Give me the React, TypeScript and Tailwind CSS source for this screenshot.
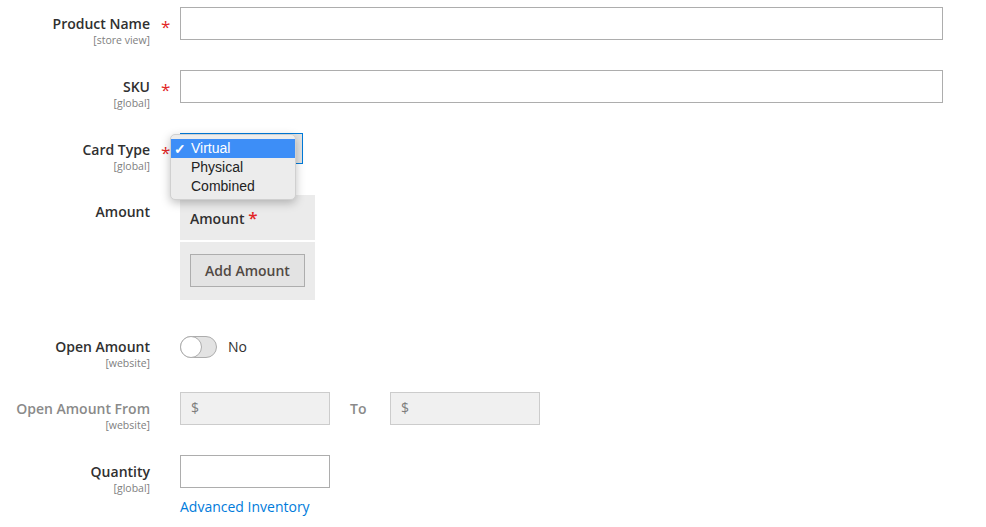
import type { ReactNode } from "react";

const Star = () => <span className="text-[#e22626] text-[17px] leading-none">*</span>;

const Label = ({ text, scope, required, muted }: { text: string; scope?: string; required?: boolean; muted?: boolean }) => (
  <div className="flex shrink-0 h-[33px]">
    <div className="w-[150px] text-right pt-[8px]">
      <div className={`text-[14px] leading-[18px] font-semibold ${muted ? "text-[#8a8a8a]" : "text-[#303030]"}`}>{text}</div>
      {scope && <div className="text-[10.5px] leading-[13px] text-[#808080] mt-[1px]">{scope}</div>}
    </div>
    <div className="w-[30px] pl-[11px] pt-[8px]">{required && <Star />}</div>
  </div>
);

const Row = ({ children, className = "" }: { children: ReactNode; className?: string }) => (
  <div className={`flex ${className}`}>{children}</div>
);

const TextInput = ({ className = "" }: { className?: string }) => (
  <div className={`h-[33px] border border-[#adadad] bg-white ${className}`} />
);

const DollarInput = () => (
  <div className="h-[33px] w-[150px] border border-[#cccccc] bg-[#f0f0f0] pl-[10px] pt-[6px] text-[14px] leading-[18px] text-[#7d7d7d]">$</div>
);

export default function App() {
  return (
    <div className="w-[986px] h-[527px] overflow-hidden bg-white font-['Open_Sans',sans-serif] pt-[7px]">
      <Row>
        <Label text="Product Name" scope="[store view]" required />
        <TextInput className="w-[763px]" />
      </Row>

      <Row className="mt-[30px]">
        <Label text="SKU" scope="[global]" required />
        <TextInput className="w-[763px]" />
      </Row>

      <Row className="mt-[30px]">
        <Label text="Card Type" scope="[global]" required />
        <div className="relative h-[33px]">
          <div className="h-[31px] w-[123px] border border-[#007bdb] bg-white flex justify-end">
            <div className="w-[33px] border-l border-[#007bdb] bg-[#e3e3e3]" />
          </div>
          <div className="absolute left-[-10px] top-[1px] w-[126px] h-[66px] rounded-[5px] bg-[#ececec] border border-[#d0d0d0] shadow-[0_3px_10px_rgba(0,0,0,0.25)] pt-[4px] font-['Liberation_Sans',sans-serif] text-[14px] text-[#222]">
            <div className="h-[19px] bg-[#3d8ef7] text-white flex items-center">
              <span className="w-[20px] pl-[3px] text-[14px] font-bold leading-none">✓</span>
              <span>Virtual</span>
            </div>
            <div className="h-[19px] flex items-center pl-[20px]">Physical</div>
            <div className="h-[19px] flex items-center pl-[20px]">Combined</div>
          </div>
        </div>
      </Row>

      <Row className="mt-[29px]">
        <Label text="Amount" />
        <div className="w-[135px] bg-[#ebebeb]">
          <div className="h-[45px] px-[10px] pt-[14px] text-[14px] leading-[18px] font-semibold text-[#303030]">
            Amount <Star />
          </div>
          <div className="h-[2px] bg-white" />
          <div className="h-[58px] px-[10px] pt-[12px]">
            <div className="h-[33px] w-[115px] border border-[#adadad] bg-[#e3e3e3] flex items-center justify-center text-[14px] font-semibold text-[#514943]">
              Add Amount
            </div>
          </div>
        </div>
      </Row>

      <Row className="mt-[30px]">
        <Label text="Open Amount" scope="[website]" />
        <div className="h-[33px] flex items-center">
          <div className="relative w-[37px] h-[22px] rounded-full bg-[#e3e3e3] border border-[#adadad]">
            <div className="absolute left-[-1px] top-[-1px] w-[22px] h-[22px] rounded-full bg-white border border-[#adadad]" />
          </div>
          <span className="ml-[11px] text-[14px] font-medium text-[#303030]">No</span>
        </div>
      </Row>

      <Row className="mt-[29px]">
        <Label text="Open Amount From" scope="[website]" muted />
        <DollarInput />
        <div className="w-[60px] pl-[20px] pt-[8px] text-[14px] leading-[18px] font-semibold text-[#8a8a8a]">To</div>
        <DollarInput />
      </Row>

      <Row className="mt-[30px]">
        <Label text="Quantity" scope="[global]" />
        <div>
          <TextInput className="w-[150px]" />
          <div className="mt-[10px] text-[14px] leading-[18px] text-[#007bdb]">Advanced Inventory</div>
        </div>
      </Row>
    </div>
  );
}
